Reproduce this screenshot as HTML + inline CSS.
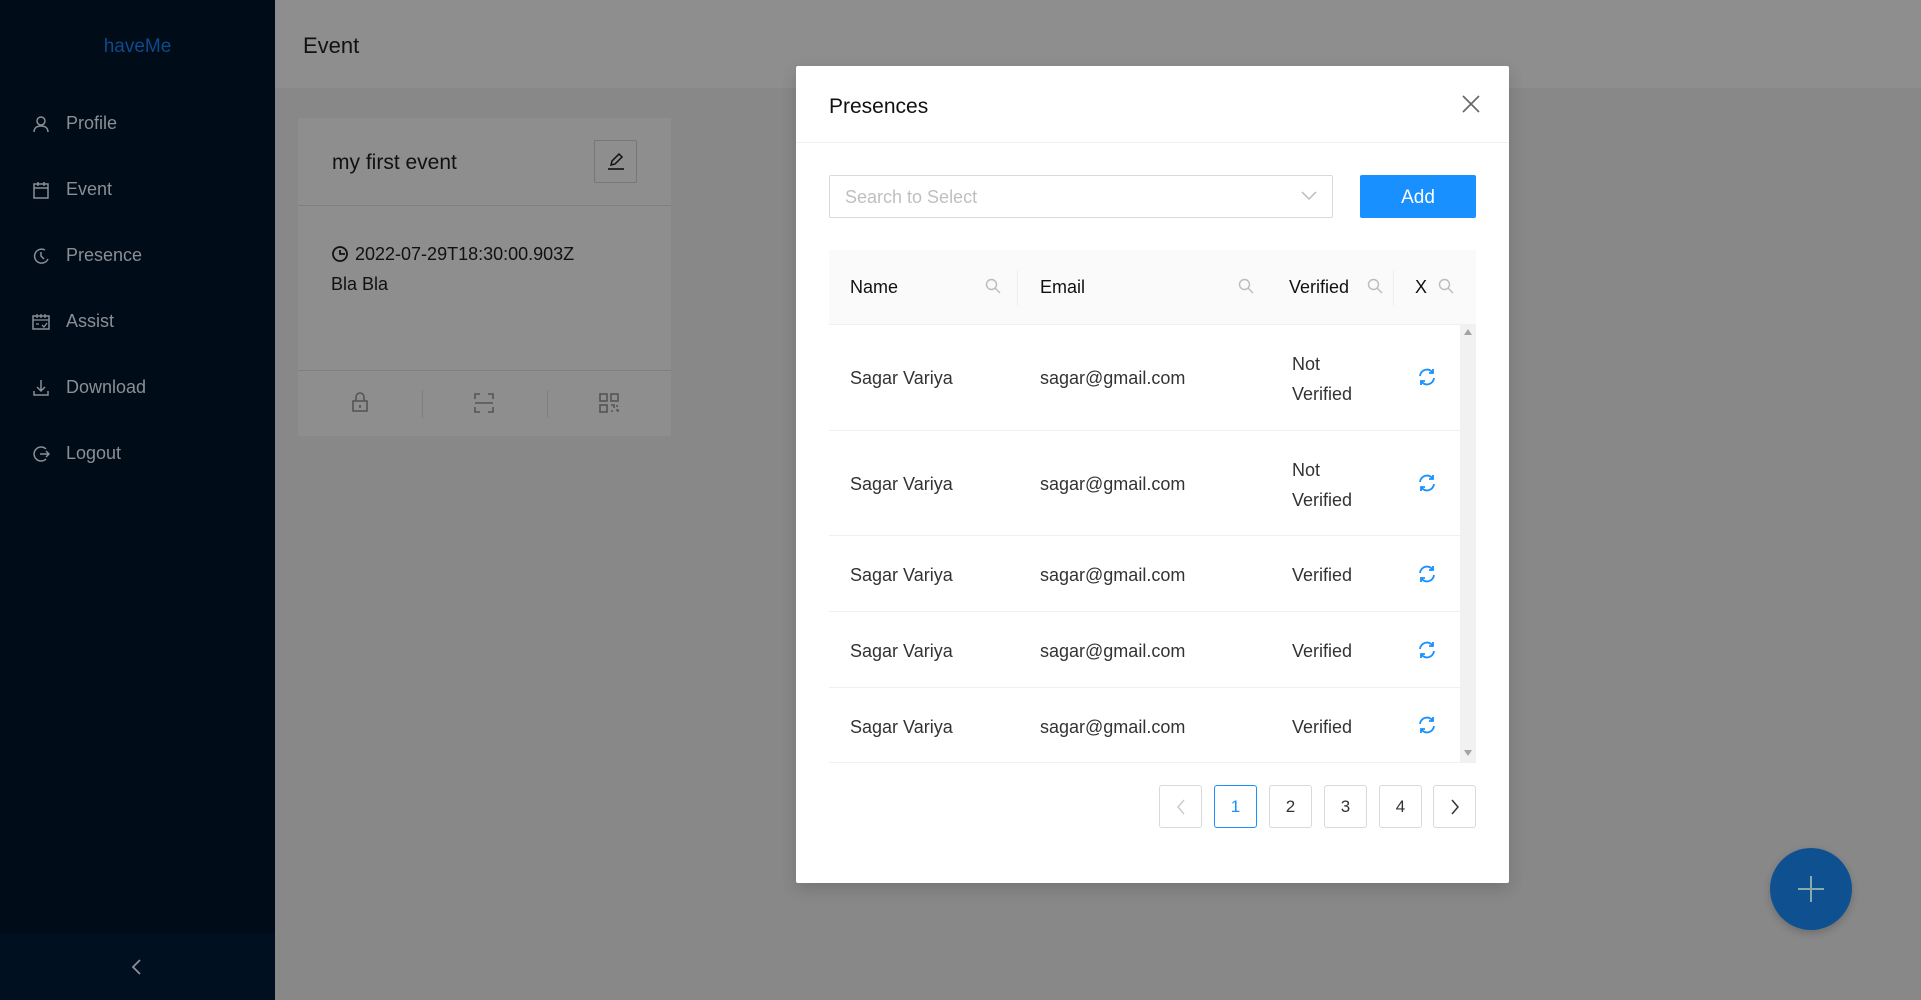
<!DOCTYPE html>
<html><head><meta charset="utf-8"><style>
*{box-sizing:border-box;margin:0;padding:0}
body{width:1921px;height:1000px;position:relative;overflow:hidden;font-family:"Liberation Sans",sans-serif;background:#888889;color:#111}
.abs{position:absolute}
.side{left:0;top:0;width:275px;height:1000px;background:#000c17}
.menu{left:32px;color:#8a8f96;font-size:18px;display:flex;align-items:center;gap:16px}
.menu svg{width:18px;height:18px}
.cell{position:absolute;font-size:18px;color:#333}
.pg{position:absolute;top:785px;width:43px;height:43px;border:1px solid #d9d9d9;border-radius:3px;background:#fff;text-align:center;line-height:41px;font-size:17px;color:#333}
.ref{position:absolute;left:1417px;width:20px;height:20px}
.srch{position:absolute;top:278px;width:16px;height:16px}
</style></head><body>
<div class="abs side"></div>
<div class="abs" style="left:0;top:933px;width:275px;height:67px;background:#001020"></div>
<svg class="abs" style="left:130px;top:958px" width="14" height="18" viewBox="0 0 14 18"><path d="M10 2L3 9l7 7" stroke="#8a8f96" stroke-width="1.8" fill="none"/></svg>
<div class="abs" style="left:0;top:36px;width:275px;text-align:center;color:#0e4a8c;font-size:19px">haveMe</div>
<div class="abs menu" style="top:113px"><svg viewBox="0 0 18 18"><circle cx="9" cy="6" r="4" stroke="#8a8f96" stroke-width="1.5" fill="none"/><path d="M2 17c0-4 3-6 7-6s7 2 7 6" stroke="#8a8f96" stroke-width="1.5" fill="none"/></svg>Profile</div>
<div class="abs menu" style="top:179px"><svg viewBox="0 0 18 18"><rect x="2" y="3" width="14" height="14" stroke="#8a8f96" stroke-width="1.5" fill="none"/><path d="M2 7h14M6 1v4M12 1v4" stroke="#8a8f96" stroke-width="1.5"/></svg>Event</div>
<div class="abs menu" style="top:245px"><svg viewBox="0 0 18 18"><path d="M13 3A7 7 0 1 0 16 12" stroke="#8a8f96" stroke-width="1.5" fill="none"/><path d="M9 5v4l3 3" stroke="#8a8f96" stroke-width="1.5" fill="none"/></svg>Presence</div>
<div class="abs menu" style="top:311px"><svg viewBox="0 0 18 18"><rect x="1" y="3" width="16" height="13" stroke="#8a8f96" stroke-width="1.5" fill="none"/><path d="M1 7h16M5 1v4M9 1v4M13 1v4M4 11h3M10 12l2 2 3-4" stroke="#8a8f96" stroke-width="1.3" fill="none"/></svg>Assist</div>
<div class="abs menu" style="top:377px"><svg viewBox="0 0 18 18"><path d="M9 1v11M5 8l4 4 4-4M2 12v4h14v-4" stroke="#8a8f96" stroke-width="1.5" fill="none"/></svg>Download</div>
<div class="abs menu" style="top:443px"><svg viewBox="0 0 18 18"><path d="M14 4A7 7 0 1 0 14 14" stroke="#8a8f96" stroke-width="1.5" fill="none"/><path d="M8 9h9M14 6l3 3-3 3" stroke="#8a8f96" stroke-width="1.5" fill="none"/></svg>Logout</div>

<div class="abs" style="left:275px;top:0;width:1646px;height:88px;background:#8e8e8e"></div>
<div class="abs" style="left:303px;top:33px;font-size:22px;color:#111">Event</div>

<div class="abs" style="left:298px;top:118px;width:373px;height:318px;background:#8e8e8e"></div>
<div class="abs" style="left:298px;top:205px;width:373px;height:1px;background:#7f7f7f"></div>
<div class="abs" style="left:298px;top:370px;width:373px;height:1px;background:#7f7f7f"></div>
<div class="abs" style="left:332px;top:151px;font-size:21px;color:#111;font-weight:500">my first event</div>
<div class="abs" style="left:594px;top:140px;width:43px;height:43px;border:1px solid #777;border-radius:2px"></div>
<svg class="abs" style="left:605px;top:150px" width="22" height="22" viewBox="0 0 22 22"><path d="M6 15l1-4 7-7 3 3-7 7z" stroke="#111" stroke-width="1.5" fill="none"/><path d="M3 19h16" stroke="#111" stroke-width="1.6"/></svg>
<svg class="abs" style="left:331px;top:245px" width="18" height="18" viewBox="0 0 18 18"><circle cx="9" cy="9" r="7" stroke="#111" stroke-width="1.8" fill="none"/><path d="M9 5v4h5" stroke="#111" stroke-width="1.8" fill="none"/></svg>
<div class="abs" style="left:355px;top:244px;font-size:18px;color:#111">2022-07-29T18:30:00.903Z</div>
<div class="abs" style="left:331px;top:274px;font-size:18px;color:#111">Bla Bla</div>
<div class="abs" style="left:422px;top:390px;width:1px;height:28px;background:#7f7f7f"></div>
<div class="abs" style="left:547px;top:390px;width:1px;height:28px;background:#7f7f7f"></div>
<svg class="abs" style="left:351px;top:392px" width="18" height="20" viewBox="0 0 18 20"><rect x="2" y="9" width="14" height="10" stroke="#555" stroke-width="1.6" fill="none"/><path d="M5 9V5a4 4 0 0 1 8 0v4M9 13v3" stroke="#555" stroke-width="1.6" fill="none"/></svg>
<svg class="abs" style="left:474px;top:393px" width="20" height="20" viewBox="0 0 20 20"><path d="M1 6V1h5M14 1h5v5M19 14v5h-5M6 19H1v-5M1 10h18" stroke="#555" stroke-width="1.6" fill="none"/></svg>
<svg class="abs" style="left:599px;top:393px" width="20" height="20" viewBox="0 0 20 20"><rect x="1" y="1" width="7" height="7" stroke="#555" stroke-width="1.6" fill="none"/><rect x="12" y="1" width="7" height="7" stroke="#555" stroke-width="1.6" fill="none"/><rect x="1" y="12" width="7" height="7" stroke="#555" stroke-width="1.6" fill="none"/><path d="M12 12h3v3M18 12v2M12 18h2M17 17h2v2" stroke="#555" stroke-width="1.6" fill="none"/></svg>

<div class="abs" style="left:1770px;top:848px;width:82px;height:82px;border-radius:50%;background:#0f5190;box-shadow:0 3px 8px rgba(0,0,0,.2)"></div>
<div class="abs" style="left:1798px;top:888px;width:26px;height:2px;background:#8aa"></div>
<div class="abs" style="left:1810px;top:876px;width:2px;height:26px;background:#8aa"></div>

<!-- modal -->
<div class="abs" style="left:796px;top:66px;width:713px;height:817px;background:#fff;border-radius:2px;box-shadow:0 6px 16px rgba(0,0,0,.15)"></div>
<div class="abs" style="left:796px;top:142px;width:713px;height:1px;background:#f0f0f0"></div>
<div class="abs" style="left:829px;top:95px;font-size:21px;color:#111;font-weight:500">Presences</div>
<svg class="abs" style="left:1462px;top:95px" width="18" height="18" viewBox="0 0 18 18"><path d="M1 1l16 16M17 1L1 17" stroke="#666" stroke-width="1.6"/></svg>
<div class="abs" style="left:829px;top:175px;width:504px;height:43px;border:1px solid #d9d9d9;border-radius:2px"></div>
<div class="abs" style="left:845px;top:187px;font-size:18px;color:#bfbfbf">Search to Select</div>
<svg class="abs" style="left:1301px;top:190px" width="16" height="12" viewBox="0 0 16 12"><path d="M1 2l7 7 7-7" stroke="#bbb" stroke-width="1.5" fill="none"/></svg>
<div class="abs" style="left:1360px;top:175px;width:116px;height:43px;background:#1890ff;border-radius:2px;color:#fff;font-size:19px;text-align:center;line-height:45px">Add</div>

<div class="abs" style="left:829px;top:250px;width:647px;height:75px;background:#fafafa;border-bottom:1px solid #f0f0f0"></div>
<div class="cell" style="left:850px;top:277px;color:#111;font-weight:500">Name</div>
<div class="cell" style="left:1040px;top:277px;color:#111">Email</div>
<div class="cell" style="left:1289px;top:277px;color:#111">Verified</div>
<div class="cell" style="left:1415px;top:277px;color:#111">X</div>
<div class="abs" style="left:1017px;top:270px;width:1px;height:36px;background:#eee"></div>
<div class="abs" style="left:1393px;top:270px;width:1px;height:36px;background:#eee"></div>
<svg class="srch" style="left:985px" viewBox="0 0 16 16"><circle cx="6.5" cy="6.5" r="5" stroke="#bbb" stroke-width="1.4" fill="none"/><path d="M10 10l5 5" stroke="#bbb" stroke-width="1.4"/></svg>
<svg class="srch" style="left:1238px" viewBox="0 0 16 16"><circle cx="6.5" cy="6.5" r="5" stroke="#bbb" stroke-width="1.4" fill="none"/><path d="M10 10l5 5" stroke="#bbb" stroke-width="1.4"/></svg>
<svg class="srch" style="left:1367px" viewBox="0 0 16 16"><circle cx="6.5" cy="6.5" r="5" stroke="#bbb" stroke-width="1.4" fill="none"/><path d="M10 10l5 5" stroke="#bbb" stroke-width="1.4"/></svg>
<svg class="srch" style="left:1438px" viewBox="0 0 16 16"><circle cx="6.5" cy="6.5" r="5" stroke="#bbb" stroke-width="1.4" fill="none"/><path d="M10 10l5 5" stroke="#bbb" stroke-width="1.4"/></svg>

<div class="abs" style="left:1460px;top:325px;width:16px;height:437px;background:#f1f1f1"></div>
<svg class="abs" style="left:1464px;top:329px" width="8" height="6"><path d="M0 6L4 0 8 6z" fill="#a3a3a3"/></svg>
<svg class="abs" style="left:1464px;top:750px" width="8" height="6"><path d="M0 0L4 6 8 0z" fill="#a3a3a3"/></svg>

<div class="abs" style="left:829px;top:430px;width:631px;height:1px;background:#f0f0f0"></div>
<div class="abs" style="left:829px;top:535px;width:631px;height:1px;background:#f0f0f0"></div>
<div class="abs" style="left:829px;top:611px;width:631px;height:1px;background:#f0f0f0"></div>
<div class="abs" style="left:829px;top:687px;width:631px;height:1px;background:#f0f0f0"></div>
<div class="abs" style="left:829px;top:762px;width:647px;height:1px;background:#f0f0f0"></div>

<div class="cell" style="left:850px;top:368px">Sagar Variya</div><div class="cell" style="left:1040px;top:368px">sagar@gmail.com</div><div class="cell" style="left:1292px;top:349px;line-height:30px">Not<br>Verified</div>
<div class="cell" style="left:850px;top:474px">Sagar Variya</div><div class="cell" style="left:1040px;top:474px">sagar@gmail.com</div><div class="cell" style="left:1292px;top:455px;line-height:30px">Not<br>Verified</div>
<div class="cell" style="left:850px;top:565px">Sagar Variya</div><div class="cell" style="left:1040px;top:565px">sagar@gmail.com</div><div class="cell" style="left:1292px;top:565px">Verified</div>
<div class="cell" style="left:850px;top:641px">Sagar Variya</div><div class="cell" style="left:1040px;top:641px">sagar@gmail.com</div><div class="cell" style="left:1292px;top:641px">Verified</div>
<div class="cell" style="left:850px;top:717px">Sagar Variya</div><div class="cell" style="left:1040px;top:717px">sagar@gmail.com</div><div class="cell" style="left:1292px;top:717px">Verified</div>

<svg class="ref" style="top:367px" viewBox="0 0 20 20"><path d="M3 9a7 7 0 0 1 13-3M17 11a7 7 0 0 1-13 3" stroke="#1890ff" stroke-width="1.8" fill="none"/><path d="M16 2v4h-4M4 18v-4h4" stroke="#1890ff" stroke-width="1.8" fill="none"/></svg>
<svg class="ref" style="top:473px" viewBox="0 0 20 20"><path d="M3 9a7 7 0 0 1 13-3M17 11a7 7 0 0 1-13 3" stroke="#1890ff" stroke-width="1.8" fill="none"/><path d="M16 2v4h-4M4 18v-4h4" stroke="#1890ff" stroke-width="1.8" fill="none"/></svg>
<svg class="ref" style="top:564px" viewBox="0 0 20 20"><path d="M3 9a7 7 0 0 1 13-3M17 11a7 7 0 0 1-13 3" stroke="#1890ff" stroke-width="1.8" fill="none"/><path d="M16 2v4h-4M4 18v-4h4" stroke="#1890ff" stroke-width="1.8" fill="none"/></svg>
<svg class="ref" style="top:640px" viewBox="0 0 20 20"><path d="M3 9a7 7 0 0 1 13-3M17 11a7 7 0 0 1-13 3" stroke="#1890ff" stroke-width="1.8" fill="none"/><path d="M16 2v4h-4M4 18v-4h4" stroke="#1890ff" stroke-width="1.8" fill="none"/></svg>
<svg class="ref" style="top:715px" viewBox="0 0 20 20"><path d="M3 9a7 7 0 0 1 13-3M17 11a7 7 0 0 1-13 3" stroke="#1890ff" stroke-width="1.8" fill="none"/><path d="M16 2v4h-4M4 18v-4h4" stroke="#1890ff" stroke-width="1.8" fill="none"/></svg>

<div class="pg" style="left:1159px"><svg width="10" height="16" viewBox="0 0 10 16" style="margin-top:13px"><path d="M8 1L2 8l6 7" stroke="#ccc" stroke-width="1.5" fill="none"/></svg></div>
<div class="pg" style="left:1214px;border-color:#1890ff;color:#1890ff">1</div>
<div class="pg" style="left:1269px">2</div>
<div class="pg" style="left:1324px">3</div>
<div class="pg" style="left:1379px">4</div>
<div class="pg" style="left:1433px"><svg width="10" height="16" viewBox="0 0 10 16" style="margin-top:13px"><path d="M2 1l6 7-6 7" stroke="#333" stroke-width="1.5" fill="none"/></svg></div>
</body></html>
